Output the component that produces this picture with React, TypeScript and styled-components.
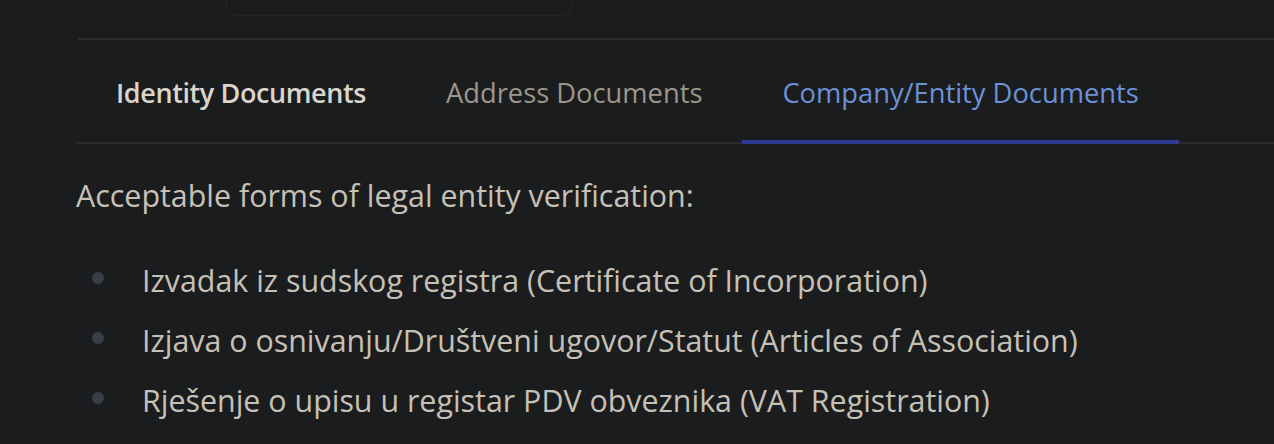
import React, { useState } from 'react'
import { createGlobalStyle, styled } from 'styled-components'

const GlobalStyle = createGlobalStyle`
  * { box-sizing: border-box; }
  body {
    margin: 0;
    background: #1b1c1e;
    font-family: "Open Sans", "Noto Sans", sans-serif;
  }
`

type TabKey = 'identity' | 'address' | 'company'

const tabs: { key: TabKey; label: string }[] = [
  { key: 'identity', label: 'Identity Documents' },
  { key: 'address', label: 'Address Documents' },
  { key: 'company', label: 'Company/Entity Documents' },
]

const companyDocs = [
  'Izvadak iz sudskog registra (Certificate of Incorporation)',
  'Izjava o osnivanju/Društveni ugovor/Statut (Articles of Association)',
  'Rješenje o upisu u registar PDV obveznika (VAT Registration)',
]

const App = () => {
  const [active, setActive] = useState<TabKey>('company')

  return (
    <Page>
      <GlobalStyle />
      <UploadCard />
      <Divider />
      <TabBar>
        {tabs.map((tab, idx) => (
          <Tab
            key={tab.key}
            type={'button'}
            $active={active === tab.key}
            $first={idx === 0}
            onClick={() => setActive(tab.key)}
          >
            {tab.label}
          </Tab>
        ))}
      </TabBar>
      <Intro>{'Acceptable forms of legal entity verification:'}</Intro>
      <DocList>
        {companyDocs.map((doc) => (
          <DocItem key={doc}>{doc}</DocItem>
        ))}
      </DocList>
    </Page>
  )
}

const Page = styled.div`
  padding-left: 76px;
  display: flex;
  flex-direction: column;
`

const UploadCard = styled.div`
  margin-left: 150px;
  width: 346px;
  height: 16px;
  border: 1px solid #25262a;
  border-top: none;
  border-radius: 0 0 10px 10px;
`

const Divider = styled.div`
  margin-top: 22px;
  margin-left: 2px;
  height: 2px;
  background: #2a2b2e;
`

const TabBar = styled.div`
  display: flex;
  border-bottom: 2px solid #2a2b2e;
`

const Tab = styled.button<{ $active: boolean; $first: boolean }>`
  height: 104px;
  margin-bottom: -2px;
  padding: 4px 40px 0;
  display: flex;
  align-items: center;
  background: none;
  border: none;
  border-bottom: 4px solid ${({ $active }) => ($active ? '#2d3a8f' : 'transparent')};
  font-family: inherit;
  font-size: ${({ $first }) => ($first ? '27px' : '27.3px')};
  font-weight: ${({ $first }) => ($first ? 600 : 400)};
  letter-spacing: ${({ $first }) => ($first ? '-0.4px' : '0')};
  color: ${({ $active, $first }) => ($active ? '#6b92d6' : $first ? '#d9d5cd' : '#9c968b')};
  cursor: pointer;
`

const Intro = styled.p`
  margin: 32px 0 0;
  font-size: 30.4px;
  line-height: 40px;
  color: #c6c1b7;
`

const DocList = styled.ul`
  margin: 34px 0 0;
  padding: 0 0 0 16px;
  list-style: none;
`

const DocItem = styled.li`
  display: flex;
  align-items: center;
  gap: 38px;
  height: 60px;
  font-size: 30.4px;
  color: #c6c1b7;

  &::before {
    content: '';
    flex: none;
    width: 12px;
    height: 12px;
    margin-top: -4px;
    border-radius: 50%;
    background: #383d4a;
  }
`

export default App
